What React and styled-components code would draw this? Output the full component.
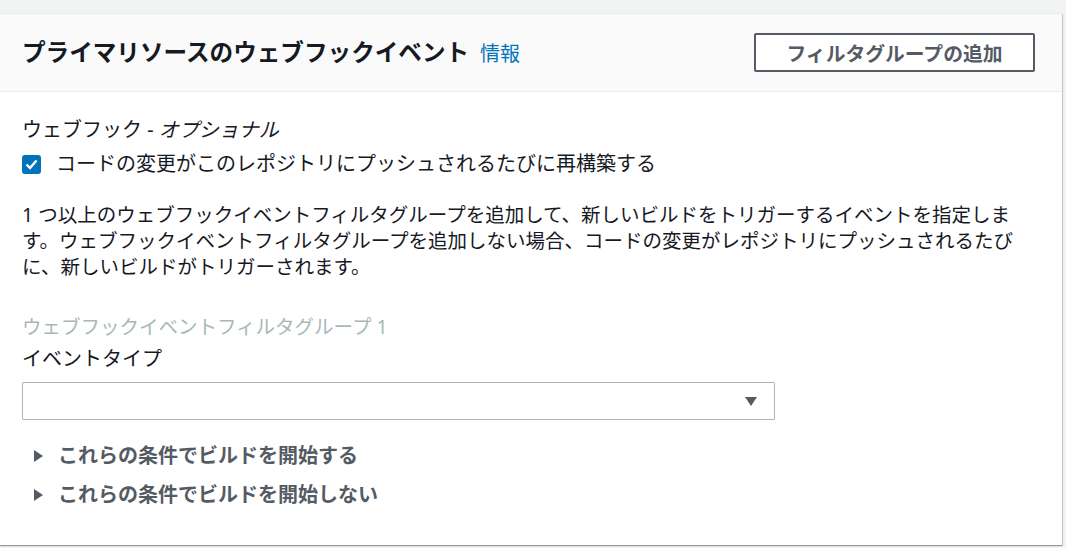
import React from 'react';
import styled, { createGlobalStyle } from 'styled-components';

const GlobalStyle = createGlobalStyle`
	html, body {
		margin: 0;
		padding: 0;
		background: #f2f3f3;
	}
	body {
		font-family: "Noto Sans", "Noto Sans CJK JP", sans-serif;
		color: #16191f;
	}
`;

const Page = styled.div`
	width: 1066px;
	height: 548px;
	padding-top: 13px;
	box-sizing: border-box;
	overflow: hidden;
`;

const Card = styled.section`
	width: 1062px;
	background: #ffffff;
	border-top: 1px solid #eaeded;
	box-shadow: 0 1px 1px 0 rgba(0, 28, 36, 0.3), 1px 1px 1px 0 rgba(0, 28, 36, 0.15);
`;

const Header = styled.header`
	height: 78px;
	box-sizing: border-box;
	display: flex;
	align-items: center;
	justify-content: space-between;
	padding: 0 27px 0 22px;
	background: #fafafa;
	border-bottom: 1px solid #eaeded;
`;

const Title = styled.h2`
	margin: 0;
	display: flex;
	align-items: baseline;
	font-size: 23.6px;
	font-weight: 700;
	line-height: 30px;
	color: #16191f;
`;

const InfoLink = styled.a`
	margin-left: 11px;
	font-size: 20px;
	font-weight: 400;
	color: #0073bb;
	text-decoration: none;
`;

const OutlineButton = styled.button`
	width: 281px;
	height: 39px;
	padding: 0;
	background: #ffffff;
	border: 2px solid #545b64;
	border-radius: 2px;
	font-family: inherit;
	font-size: 19.8px;
	font-weight: 700;
	color: #545b64;
	cursor: pointer;
`;

const Body = styled.div`
	padding: 25px 24px 37px 22px;
	font-size: 19.5px;
	line-height: 26px;
`;

const FieldLabel = styled.div`
	font-size: ${(p) => (p.$muted ? 19.5 : 20)}px;
	color: ${(p) => (p.$muted ? '#aab7b8' : '#16191f')};
	margin-top: ${(p) => p.$gap || 0}px;

	em {
		font-style: italic;
	}
`;

const CheckRow = styled.label`
	display: flex;
	align-items: center;
	gap: 15px;
	margin-top: 8px;
	font-size: 20px;
`;

const CheckBox = styled.span`
	width: 19px;
	height: 19px;
	border-radius: 3px;
	background: #0073bb;
	display: flex;
	align-items: center;
	justify-content: center;
	flex-shrink: 0;
`;

const Description = styled.p`
	margin: 25px 0 0;
`;

const SelectBox = styled.div`
	margin-top: 10px;
	width: 753px;
	height: 38px;
	box-sizing: border-box;
	border: 1px solid #aab7b8;
	border-radius: 1px;
	display: flex;
	align-items: center;
	justify-content: flex-end;
	padding-right: 17px;
	background: #ffffff;
`;

const Expander = styled.div`
	display: flex;
	align-items: center;
	gap: 15px;
	padding-left: 12px;
	margin-top: ${(p) => p.$gap}px;
	font-size: 20px;
	font-weight: 700;
	color: #545b64;
`;

const Caret = ({ down }) => (
	<svg width={down ? 12 : 9} height={down ? 9 : 12} viewBox={down ? '0 0 12 9' : '0 0 9 12'}>
		{down ? <polygon points="0,0 12,0 6,9" fill="#545b64" /> : <polygon points="0,0 9,6 0,12" fill="#545b64" />}
	</svg>
);

const App = () => {
	return (
		<>
			<GlobalStyle />
			<Page>
				<Card>
					<Header>
						<Title>
							プライマリソースのウェブフックイベント
							<InfoLink href="#">情報</InfoLink>
						</Title>
						<OutlineButton>フィルタグループの追加</OutlineButton>
					</Header>
					<Body>
						<FieldLabel>
							ウェブフック - <em>オプショナル</em>
						</FieldLabel>
						<CheckRow>
							<CheckBox>
								<svg width="13" height="11" viewBox="0 0 13 11">
									<polyline points="1.5,5.5 5,9 11.5,1.5" fill="none" stroke="#ffffff" strokeWidth="2.4" />
								</svg>
							</CheckBox>
							コードの変更がこのレポジトリにプッシュされるたびに再構築する
						</CheckRow>
						<Description>
							1 つ以上のウェブフックイベントフィルタグループを追加して、新しいビルドをトリガーするイベントを指定します。ウェブフックイベントフィルタグループを追加しない場合、コードの変更がレポジトリにプッシュされるたびに、新しいビルドがトリガーされます。
						</Description>
						<FieldLabel $muted $gap={34}>
							ウェブフックイベントフィルタグループ 1
						</FieldLabel>
						<FieldLabel $gap={6}>イベントタイプ</FieldLabel>
						<SelectBox>
							<Caret down />
						</SelectBox>
						<Expander $gap={23}>
							<Caret />
							これらの条件でビルドを開始する
						</Expander>
						<Expander $gap={13}>
							<Caret />
							これらの条件でビルドを開始しない
						</Expander>
					</Body>
				</Card>
			</Page>
		</>
	);
};

export default App;
